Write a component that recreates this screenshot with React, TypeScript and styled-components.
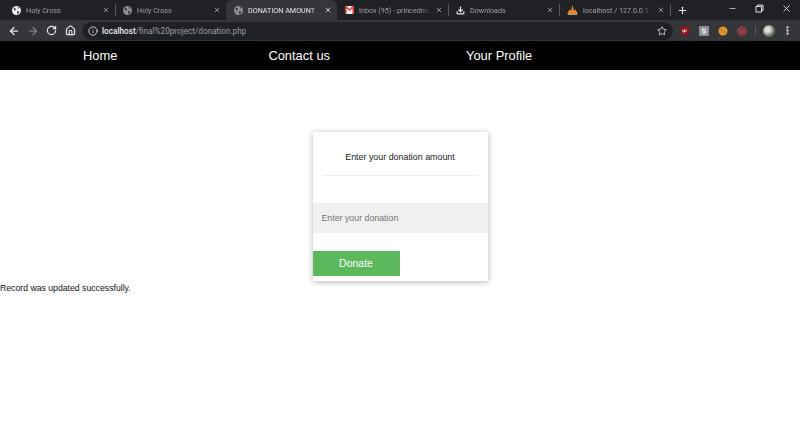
import React from 'react';
import styled, { createGlobalStyle } from 'styled-components';
import { ArrowLeft, ArrowRight, RotateCw, Home, Info, Star, X, Plus, Minus, Download, MoreVertical } from 'lucide-react';

const GlobalStyle = createGlobalStyle`
  html, body {
    margin: 0;
    padding: 0;
    background: #fff;
    font-family: "Liberation Sans", Arial, sans-serif;
    overflow: hidden;
  }
`;

const TabStrip = styled.div`
  height: 20px;
  background: #202124;
  display: flex;
  align-items: stretch;
  padding-left: 4px;
`;

const Tab = styled.div<{ $active?: boolean; $divider?: boolean }>`
  width: 111px;
  box-sizing: border-box;
  display: flex;
  align-items: center;
  gap: 5px;
  padding: 0 5px 0 8px;
  background: ${(p) => (p.$active ? '#35363a' : 'transparent')};
  border-radius: ${(p) => (p.$active ? '6px 6px 0 0' : '0')};
  color: ${(p) => (p.$active ? '#e8eaed' : '#9aa0a6')};
  font-size: 7.2px;
  font-family: "Roboto", sans-serif;
  position: relative;
  & svg {
    flex-shrink: 0;
  }
  &::after {
    content: '';
    display: ${(p) => (p.$divider ? 'block' : 'none')};
    position: absolute;
    right: -1px;
    top: 4px;
    bottom: 4px;
    width: 1px;
    background: #55585c;
  }
`;

const TabTitle = styled.span`
  flex: 1;
  min-width: 0;
  overflow: hidden;
  white-space: nowrap;
  mask-image: linear-gradient(to left, transparent, #000 8px);
`;

const NewTab = styled.div`
  margin-left: 4px;
  width: 16px;
  display: flex;
  align-items: center;
  justify-content: center;
  color: #e8eaed;
`;

const WindowControls = styled.div`
  margin-left: auto;
  display: flex;
  align-items: flex-start;
  color: #d8dade;
`;

const WindowButton = styled.div`
  width: 27px;
  height: 16px;
  display: flex;
  align-items: center;
  justify-content: center;
`;

const Toolbar = styled.div`
  height: 21px;
  background: #35363a;
  display: flex;
  align-items: center;
  padding: 0 7px 0 7px;
`;

const NavIcons = styled.div`
  display: flex;
  align-items: center;
  gap: 6px;
  color: #e8eaed;
`;

const NavIcon = styled.span<{ $dim?: boolean }>`
  width: 13px;
  display: flex;
  justify-content: center;
  color: ${(p) => (p.$dim ? '#7d8084' : '#e8eaed')};
`;

const Omnibox = styled.div`
  margin-left: 5px;
  width: 591px;
  height: 18px;
  background: #202124;
  border-radius: 9px;
  display: flex;
  align-items: center;
  padding: 0 6px;
  box-sizing: border-box;
  color: #e8eaed;
  font-size: 8.2px;
  font-family: "Roboto", sans-serif;
`;

const Url = styled.span`
  margin-left: 4px;
  color: #9aa0a6;
  & b {
    color: #e8eaed;
    font-weight: 500;
  }
`;

const StarSlot = styled.span`
  margin-left: auto;
  display: flex;
  color: #e8eaed;
`;

const Extensions = styled.div`
  margin-left: 7px;
  display: flex;
  align-items: center;
  gap: 9px;
`;

const Extension = styled.span`
  width: 10px;
  height: 10px;
  display: flex;
`;

const ToolbarDivider = styled.span`
  width: 1px;
  height: 10px;
  background: #55585c;
  margin: 0 -2px 0 -1px;
`;

const Avatar = styled.span`
  width: 12px;
  height: 12px;
  border-radius: 50%;
  background: radial-gradient(circle at 40% 40%, #e2e4dc 20%, #6d7568 60%, #3c4039);
`;

const MenuDots = styled.span`
  display: flex;
  color: #e8eaed;
  margin-left: -2px;
`;

const SiteNav = styled.nav`
  height: 29px;
  background: #000;
  display: flex;
  align-items: center;
`;

const SiteLink = styled.a<{ $left: number }>`
  margin-left: ${(p) => p.$left}px;
  color: #fff;
  font-size: 12.9px;
  line-height: 29px;
  white-space: nowrap;
`;

const Main = styled.main`
  display: flex;
  justify-content: center;
  padding-top: 62px;
`;

const Card = styled.div`
  width: 175px;
  height: 149px;
  box-sizing: border-box;
  background: #fff;
  box-shadow: 0 1px 6px rgba(0, 0, 0, 0.3);
`;

const CardHeading = styled.div`
  margin: 0 10px;
  height: 43px;
  border-bottom: 1px solid #eeeeee;
  font-size: 8.9px;
  color: #222;
  text-align: center;
  line-height: 50px;
`;

const DonationInput = styled.input`
  display: block;
  width: 100%;
  height: 30px;
  margin-top: 27px;
  box-sizing: border-box;
  border: 0;
  outline: 0;
  padding: 0 9px;
  background: #f0f0f0;
  font-family: inherit;
  font-size: 8.8px;
  &::placeholder {
    color: #757575;
    opacity: 1;
  }
`;

const DonateButton = styled.button`
  display: block;
  width: 87px;
  height: 25px;
  margin-top: 18px;
  border: 0;
  padding: 0 0 2px;
  background: #5cb85c;
  color: #fff;
  font-family: inherit;
  font-size: 10.5px;
`;

const Status = styled.div`
  margin-top: 1px;
  font-size: 8.7px;
  line-height: 12px;
  color: #111;
`;

const tabs = [
  { title: 'Holy Cross', icon: 'globe-bright', divider: true },
  { title: 'Holy Cross', icon: 'globe' },
  { title: 'DONATION AMOUNT', icon: 'globe', active: true },
  { title: 'Inbox (95) - princedmel', icon: 'gmail', divider: true },
  { title: 'Downloads', icon: 'download', divider: true },
  { title: 'localhost / 127.0.0.1 / d', icon: 'pma', divider: true },
];

const TabIcon = ({ kind }: { kind: string }) => {
  if (kind === 'gmail') {
    return (
      <svg width="9" height="8" viewBox="0 0 9 8">
        <rect width="9" height="8" fill="#f1f1f1" />
        <path d="M0 0h1.3L4.5 3 7.7 0H9v8H7.400V2.600L4.500 5 1.600 2.600V8H0z" fill="#d9443a" />
      </svg>
    );
  }
  if (kind === 'download') {
    return <Download size={9} color="#e8eaed" strokeWidth={3} />;
  }
  if (kind === 'pma') {
    return (
      <svg width="11" height="10" viewBox="0 0 11 10">
        <path d="M0 9 3 4l1 2 1.500-6L7 6l1-2 3 5z" fill="#e08a2c" />
        <path d="M1 9h9v1H1z" fill="#9c9ea3" />
      </svg>
    );
  }
  return (
    <svg width="9" height="9" viewBox="0 0 9 9">
      <circle cx="4.500" cy="4.500" r="4.500" fill={kind === 'globe-bright' ? '#f1f3f4' : '#8c9095'} />
      <path d="M1.500 1.500 4 2.500 3.500 4.500 2 4.500ZM5 5l2.500.5L6 8.500 5 7.500ZM5.500.5 7.500 1.500 6.500 3Z" fill="#202124" opacity=".75" />
    </svg>
  );
};

const App = () => (
  <>
    <GlobalStyle />
    <TabStrip>
      {tabs.map((tab, i) => (
        <Tab key={i} $active={tab.active} $divider={tab.divider}>
          <TabIcon kind={tab.icon} />
          <TabTitle>{tab.title}</TabTitle>
          <X size={8} strokeWidth={2.5} />
        </Tab>
      ))}
      <NewTab>
        <Plus size={11} strokeWidth={2.5} />
      </NewTab>
      <WindowControls>
        <WindowButton>
          <Minus size={9} />
        </WindowButton>
        <WindowButton>
          <svg width="9" height="9" viewBox="0 0 9 9" fill="none" stroke="currentColor">
            <rect x="1" y="2.500" width="5.500" height="5.500" />
            <path d="M2.500 2.500V1H8v5.500H6.500" />
          </svg>
        </WindowButton>
        <WindowButton>
          <X size={11} />
        </WindowButton>
      </WindowControls>
    </TabStrip>
    <Toolbar>
      <NavIcons>
        <NavIcon>
          <ArrowLeft size={12} strokeWidth={2.5} />
        </NavIcon>
        <NavIcon $dim>
          <ArrowRight size={12} strokeWidth={2.5} />
        </NavIcon>
        <NavIcon>
          <RotateCw size={11} strokeWidth={2.5} />
        </NavIcon>
        <NavIcon>
          <Home size={11} strokeWidth={2.5} />
        </NavIcon>
      </NavIcons>
      <Omnibox>
        <Info size={10} />
        <Url>
          <b>localhost</b>/final%20project/donation.php
        </Url>
        <StarSlot>
          <Star size={10} strokeWidth={2} />
        </StarSlot>
      </Omnibox>
      <Extensions>
        <Extension>
          <svg width="10" height="10" viewBox="0 0 10 10">
            <path d="M5 0 9.500 1.200V5C9.500 8 7 9.500 5 10 3 9.500.5 8 .5 5V1.200z" fill="#8b1a1f" />
            <path d="M3 3.500V6h1.500V3.500M6 3.500V6" stroke="#f3d6d6" fill="none" />
          </svg>
        </Extension>
        <Extension>
          <svg width="10" height="10" viewBox="0 0 10 10">
            <rect width="10" height="10" rx="1" fill="#8e9093" />
            <path d="M7 3H3.500v2H6.500v2H3" stroke="#f1f1f1" strokeWidth="1.200" fill="none" />
          </svg>
        </Extension>
        <Extension>
          <svg width="10" height="10" viewBox="0 0 10 10">
            <circle cx="5" cy="5" r="4.500" fill="#e0982e" />
            <circle cx="3.500" cy="4" r=".7" fill="#8a5415" />
            <circle cx="6.500" cy="6" r=".7" fill="#8a5415" />
          </svg>
        </Extension>
        <Extension>
          <svg width="10" height="10" viewBox="0 0 10 10" fill="none" stroke="#c5444c">
            <circle cx="5" cy="5" r="4.300" />
            <circle cx="5" cy="5" r="2.300" />
            <path d="M1.500 3 8 7.500M2 7.500 8.500 3" />
          </svg>
        </Extension>
        <ToolbarDivider />
        <Avatar />
        <MenuDots>
          <MoreVertical size={11} strokeWidth={3} />
        </MenuDots>
      </Extensions>
    </Toolbar>
    <SiteNav>
      <SiteLink $left={83}>Home</SiteLink>
      <SiteLink $left={151}>Contact us</SiteLink>
      <SiteLink $left={136}>Your Profile</SiteLink>
    </SiteNav>
    <Main>
      <Card>
        <CardHeading>Enter your donation amount</CardHeading>
        <DonationInput placeholder="Enter your donation" />
        <DonateButton>Donate</DonateButton>
      </Card>
    </Main>
    <Status>Record was updated successfully.</Status>
  </>
);

export default App;
